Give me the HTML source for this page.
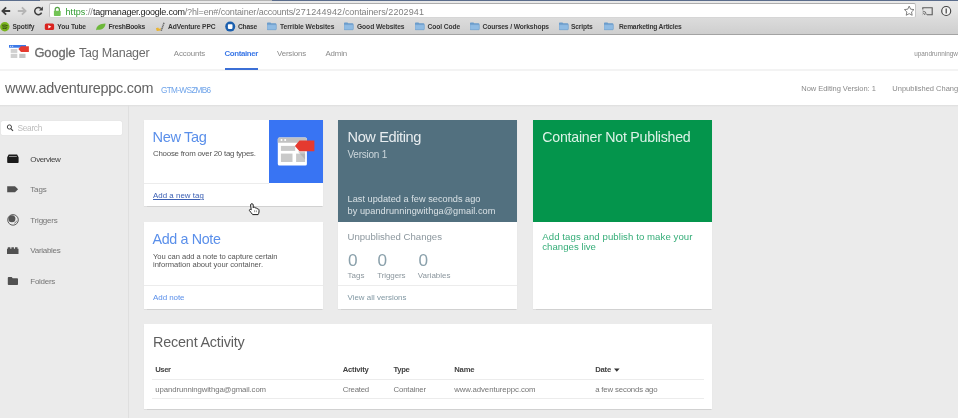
<!DOCTYPE html>
<html lang="en">
<head>
<meta charset="utf-8">
<title>Google Tag Manager</title>
<style>
html,body{margin:0;padding:0;}
body{width:958px;height:418px;overflow:hidden;position:relative;background:#ebebeb;font-family:"Liberation Sans",sans-serif;}
#root{position:absolute;left:0;top:0;width:958px;height:418px;overflow:hidden;will-change:transform;}
.a{position:absolute;}
.t{position:absolute;white-space:nowrap;}
#chrome{left:0;top:0;width:958px;height:35.2px;background:linear-gradient(#eaeaea 0,#e4e4e4 11px,#dadada 20px,#cfcfcf 33.5px);}
#topline{left:0;top:0;width:958px;height:1.2px;background:#b4b4b4;}
#urlbox{left:49px;top:3.2px;width:866.7px;height:14.8px;background:#fff;border:1px solid;border-color:#adadad #c6c6c6 #d6d6d6 #c6c6c6;border-radius:2px;box-sizing:border-box;}
#chromeborder{left:0;top:33.8px;width:958px;height:1.4px;background:#a3a3a3;}
#hdr{left:0;top:35.2px;width:958px;height:69.8px;background:#fff;}
#hdrline{left:0;top:69.4px;width:958px;height:1.6px;background:#f3f3f3;}
#hdrshadow{left:0;top:105px;width:958px;height:2px;background:linear-gradient(#dedede,#ebebeb);}
#navul{left:224.5px;top:67.8px;width:33.5px;height:2.3px;background:#3b6fd6;}
#sbline{left:128.2px;top:105px;width:1.1px;height:313px;background:#dfdfdf;}
#search{left:1px;top:120.6px;width:121px;height:14.6px;background:#fff;border-radius:1.5px;box-shadow:0 0 1px #c8c8c8;}
.card{background:#fff;box-shadow:0 0.6px 1px rgba(0,0,0,.11);}
.hr{height:1px;background:#ececec;}
</style>
</head>
<body>
<div id="root">
<!-- browser chrome -->
<div class="a" id="chrome"></div>
<div class="a" id="topline"></div>
<div class="a" style="left:0;top:0;width:40px;height:1px;background:#5b6d8c"></div>
<div class="a" style="left:272px;top:0;width:686px;height:1px;background:#5b6d8c"></div>
<div class="a" id="urlbox"></div>
<div class="a" id="chromeborder"></div>
<svg class="a" style="left:0;top:0" width="958" height="36" viewBox="0 0 958 36">
  <!-- back -->
  <path d="M10.2 11H2.6M6.1 7.3L2.4 11L6.1 14.7" fill="none" stroke="#3d3d3d" stroke-width="1.8"/>
  <!-- forward -->
  <path d="M17.8 11H25.4M21.9 7.3L25.6 11L21.9 14.7" fill="none" stroke="#b5b5b5" stroke-width="1.8"/>
  <!-- reload -->
  <path d="M41.6 12.6A3.6 3.6 0 1 1 40.9 8.6" fill="none" stroke="#3d3d3d" stroke-width="1.5"/>
  <path d="M42.9 6.6V10.6H38.9Z" fill="#3d3d3d"/>
  <!-- lock -->
  <path d="M55.2 11V9.500a2.100 2.100 0 0 1 4.200 0V11" fill="none" stroke="#55a244" stroke-width="1.200"/>
  <rect x="53.900" y="10.700" width="6.800" height="5.300" rx="0.800" fill="#72c455"/>
  <!-- star -->
  <path transform="translate(909.2 11.3) scale(1.06)" d="M0-4.9l1.35 2.9 3.15.4-2.3 2.2.6 3.15-2.8-1.55-2.8 1.55.6-3.15-2.3-2.2 3.15-.4z" fill="#fff" stroke="#6b6b6b" stroke-width="0.8" stroke-linejoin="round"/>
  <!-- cast -->
  <path d="M922.8 9.6V7.7h9.4v7h-5.2" fill="none" stroke="#5a5a5a" stroke-width="1.1"/>
  <path d="M922.6 14.9a0.1 0.1 0 0 1 0-.2M922.6 12.9a2 2 0 0 1 2 2M922.6 11a3.8 3.8 0 0 1 3.7 3.9" fill="none" stroke="#5a5a5a" stroke-width="0.8"/>
  <!-- info -->
  <circle cx="946.2" cy="11" r="4.5" fill="#f4f4f4" stroke="#444" stroke-width="1.15"/>
  <rect x="945.6" y="8.500" width="1.200" height="5" fill="#444"/>
  <!-- bookmarks icons -->
  <circle cx="4.8" cy="26.7" r="4.7" fill="#7ab51d"/>
  <path d="M2.4 25.2q2.6-.8 5 .4M2.7 26.9q2.2-.6 4.2.4M3 28.4q1.8-.4 3.4.3" fill="none" stroke="#2a3a10" stroke-width="0.8" stroke-linecap="round"/>
  <rect x="44.8" y="23.4" width="9.3" height="6.6" rx="1.6" fill="#d9231f"/>
  <path d="M48.3 25v3.4l3-1.7z" fill="#fff"/>
  <path d="M96.1 30.3c.3-4.600 3.600-6.700 9.400-6.800c-.2 4.300-3.200 6.500-8.200 6.300z" fill="#6db83a"/>
  <path d="M155.900 28.300l2.300-.9.900 1.600 1.500-1.200v2.800l-3.800.3z" fill="#eab432"/>
  <path d="M161.200 30.800l3-8.600" stroke="#6a6a6a" stroke-width="1.500" stroke-dasharray="1.300 0.500"/>
  <circle cx="230.2" cy="26.6" r="5" fill="#1b5fae"/>
  <rect x="227.9" y="24.3" width="4.6" height="4.6" rx="0.8" fill="#fff"/>
  <defs><g id="fold">
    <path d="M0 1.200a.8.800 0 0 1 .8-.8h2.600l.9.900h4.200a.8.800 0 0 1 .8.800v4.900a.8.800 0 0 1-.8.800H.8a.8.800 0 0 1-.8-.8z" fill="#6a9ccb"/>
    <path d="M0 2.600h9.300v4.400a.8.800 0 0 1-.8.800H.8a.8.800 0 0 1-.8-.8z" fill="#8fbbe3" stroke="#6a98c6" stroke-width="0.4"/>
  </g></defs>
</svg>
<svg class="a" style="left:267px;top:22.400px" width="10" height="9"><use href="#fold"/></svg>
<svg class="a" style="left:344px;top:22.400px" width="10" height="9"><use href="#fold"/></svg>
<svg class="a" style="left:415px;top:22.400px" width="10" height="9"><use href="#fold"/></svg>
<svg class="a" style="left:470px;top:22.400px" width="10" height="9"><use href="#fold"/></svg>
<svg class="a" style="left:558.800px;top:22.400px" width="10" height="9"><use href="#fold"/></svg>
<svg class="a" style="left:604px;top:22.400px" width="10" height="9"><use href="#fold"/></svg>

<!-- GTM header -->
<div class="a" id="hdr"></div>
<div class="a" id="hdrline"></div>
<div class="a" id="hdrshadow"></div>
<div class="a" id="navul"></div>
<svg class="a" style="left:8px;top:43px" width="24" height="18" viewBox="8 43 24 18">
  <rect x="9" y="45" width="17" height="2.700" fill="#3b78e7"/>
  <rect x="10" y="45.800" width="1.200" height="1" fill="#cfe0ff"/><rect x="12" y="45.800" width="1.200" height="1" fill="#cfe0ff"/>
  <rect x="10.700" y="49" width="6.600" height="3.900" fill="#d0d0d0"/>
  <rect x="10.700" y="53.800" width="6.600" height="4.200" fill="#d0d0d0"/>
  <rect x="19.300" y="53.800" width="6.200" height="4.200" fill="#c4c4c4"/>
  <path d="M18.400 49.100l2.600-2.900h7.900v5.800h-7.900z" fill="#e53a2f"/>
</svg>

<!-- sidebar -->
<div class="a" id="sbline"></div>
<div class="a" id="search"></div>
<svg class="a" style="left:0;top:120px" width="30" height="170" viewBox="0 120 30 170">
  <circle cx="9.400" cy="127" r="2.100" fill="none" stroke="#444" stroke-width="1"/>
  <path d="M10.900 128.600l2.100 2.200" stroke="#444" stroke-width="1.200"/>
  <!-- overview -->
  <path d="M7.200 157.200l1.500-2.600h8.400l1.500 2.600v5a.8.800 0 0 1-.8.800H8a.8.800 0 0 1-.8-.8z" fill="#1a1a1a"/>
  <path d="M9 156.500h7.800" stroke="#9a9a9a" stroke-width="0.900"/>
  <!-- tags -->
  <path d="M7.200 186.300h7.800l3.100 3-3.100 3H7.200z" fill="#515151"/>
  <!-- triggers -->
  <circle cx="13" cy="219.900" r="5.300" fill="none" stroke="#555" stroke-width="0.950"/>
  <circle cx="11.900" cy="218.800" r="3.500" fill="#555"/>
  <path d="M14.200 223.300a3.600 3.600 0 0 0 2.500-2.600" fill="none" stroke="#555" stroke-width="0.900" opacity=".75"/>
  <!-- variables -->
  <path d="M7 253.900v-5.200h.8v-1.400h2.500v1.400h1.100v-1.400h2.500v1.400h1.100v-1.400h2.500v1.400h1V253.900z" fill="#515151"/>
  <!-- folders -->
  <path d="M7.800 277.900a.8.800 0 0 1 .8-.8h3.100l1 1.200h4.500a.8.800 0 0 1 .8.800v5.100a.8.800 0 0 1-.8.800H8.600a.8.800 0 0 1-.8-.8z" fill="#515151"/>
</svg>

<!-- card: new tag -->
<div class="a card" style="left:144px;top:120px;width:179px;height:86.4px;"></div>
<div class="a hr" style="left:144px;top:182.5px;width:125px;"></div>
<div class="a" style="left:269px;top:120px;width:54px;height:63px;background:#3874f3;"></div>
<svg class="a" style="left:269px;top:120px" width="54" height="63" viewBox="269 120 54 63">
  <rect x="277.800" y="137.400" width="29.100" height="28.200" rx="1.500" fill="#fff"/>
  <path d="M277.800 142.800v-3.900a1.500 1.500 0 0 1 1.500-1.500h26.100a1.500 1.500 0 0 1 1.500 1.500v3.900z" fill="#c2c2c2"/>
  <circle cx="281.500" cy="140.100" r="1" fill="#fff"/><circle cx="285.200" cy="140.100" r="1" fill="#fff"/>
  <rect x="280.900" y="145.900" width="14.300" height="5" fill="#c9c9c9"/>
  <rect x="280.900" y="153.600" width="11.600" height="8.400" fill="#c9c9c9"/>
  <rect x="296.100" y="153.600" width="9" height="8.400" fill="#c9c9c9"/>
  <path d="M298 151.500l7.100 8v-8z" fill="#a9a9a9" opacity=".6"/>
  <path d="M294.900 145.900l4.600-5.400h14.900v10.800h-14.900z" fill="#e53a2f"/>
</svg>

<!-- card: add a note -->
<div class="a card" style="left:144px;top:222px;width:179px;height:86.7px;"></div>
<div class="a hr" style="left:144px;top:284.5px;width:179px;"></div>

<!-- card: now editing -->
<div class="a card" style="left:338.3px;top:120px;width:179px;height:188.7px;"></div>
<div class="a" style="left:338.3px;top:120px;width:179px;height:101.5px;background:#52707f;"></div>
<div class="a hr" style="left:338.3px;top:285px;width:179px;"></div>

<!-- card: container not published -->
<div class="a card" style="left:532.7px;top:120px;width:179.2px;height:188.7px;"></div>
<div class="a" style="left:532.7px;top:120px;width:179.2px;height:101.5px;background:#04954c;"></div>

<!-- card: recent activity -->
<div class="a card" style="left:144px;top:323.7px;width:568px;height:85.3px;"></div>
<div class="a hr" style="left:152px;top:379px;width:552px;"></div>
<div class="a hr" style="left:152px;top:398px;width:552px;"></div>
<svg class="a" style="left:613.2px;top:367px" width="8" height="6" viewBox="0 0 8 6"><path d="M1 1.500h5.600L3.800 4.700z" fill="#333"/></svg>

<span class="t" id="url1" style="left:65.5px;top:6.00px;font-size:9px;line-height:12px;color:#2e9a2e;letter-spacing:0.077px;">https</span>
<span class="t" id="url2" style="left:85.6px;top:6.00px;font-size:9px;line-height:12px;color:#8a8a8a;letter-spacing:-0.205px;">://</span>
<span class="t" id="url3" style="left:93px;top:6.00px;font-size:9px;line-height:12px;color:#1a1a1a;letter-spacing:-0.232px;">tagmanager.google.com</span>
<span class="t" id="url4" style="left:184.8px;top:6.00px;font-size:9px;line-height:12px;color:#808080;letter-spacing:-0.177px;">/?hl=en#/</span>
<span class="t" id="url5" style="left:220.7px;top:6.00px;font-size:9px;line-height:12px;color:#808080;letter-spacing:-0.170px;">container</span>
<span class="t" id="url6" style="left:256.4px;top:6.00px;font-size:9px;line-height:12px;color:#808080;letter-spacing:-0.223px;">/accounts/</span>
<span class="t" id="url7" style="left:295.6px;top:6.00px;font-size:9px;line-height:12px;color:#808080;letter-spacing:0.182px;">271244942</span>
<span class="t" id="url8" style="left:342.5px;top:6.00px;font-size:9px;line-height:12px;color:#808080;letter-spacing:-0.086px;">/containers/</span>
<span class="t" id="url9" style="left:388.3px;top:6.00px;font-size:9px;line-height:12px;color:#808080;letter-spacing:0.093px;">2202941</span>
<span class="t" id="bm1" style="left:12.5px;top:22.00px;font-size:6.7px;line-height:9px;color:#363636;letter-spacing:-0.110px;font-weight:bold">Spotify</span>
<span class="t" id="bm2" style="left:57.3px;top:22.00px;font-size:6.7px;line-height:9px;color:#363636;letter-spacing:-0.096px;font-weight:bold">You Tube</span>
<span class="t" id="bm3" style="left:108.5px;top:22.00px;font-size:6.7px;line-height:9px;color:#363636;letter-spacing:-0.216px;font-weight:bold">FreshBooks</span>
<span class="t" id="bm4" style="left:168px;top:22.00px;font-size:6.7px;line-height:9px;color:#363636;letter-spacing:-0.120px;font-weight:bold">AdVenture PPC</span>
<span class="t" id="bm5" style="left:238px;top:22.00px;font-size:6.7px;line-height:9px;color:#363636;letter-spacing:-0.216px;font-weight:bold">Chase</span>
<span class="t" id="bm6" style="left:280px;top:22.00px;font-size:6.7px;line-height:9px;color:#363636;letter-spacing:-0.038px;font-weight:bold">Terrible Websites</span>
<span class="t" id="bm7" style="left:357px;top:22.00px;font-size:6.7px;line-height:9px;color:#363636;letter-spacing:-0.082px;font-weight:bold">Good Websites</span>
<span class="t" id="bm8" style="left:427.5px;top:22.00px;font-size:6.7px;line-height:9px;color:#363636;letter-spacing:-0.104px;font-weight:bold">Cool Code</span>
<span class="t" id="bm9" style="left:482.5px;top:22.00px;font-size:6.7px;line-height:9px;color:#363636;letter-spacing:-0.113px;font-weight:bold">Courses / Workshops</span>
<span class="t" id="bm10" style="left:571px;top:22.00px;font-size:6.7px;line-height:9px;color:#363636;letter-spacing:-0.167px;font-weight:bold">Scripts</span>
<span class="t" id="bm11" style="left:619px;top:22.00px;font-size:6.7px;line-height:9px;color:#363636;letter-spacing:-0.208px;font-weight:bold">Remarketing Articles</span>
<span class="t" id="lg1" style="left:34.4px;top:44.00px;font-size:12.9px;line-height:17px;color:#6b6b6b;letter-spacing:-0.096px;-webkit-text-stroke:0.3px #6b6b6b">Google</span>
<span class="t" id="lg2" style="left:79px;top:45.00px;font-size:12.5px;line-height:16px;color:#6b6b6b;letter-spacing:-0.224px;">Tag Manager</span>
<span class="t" id="nav1" style="left:173.8px;top:48.00px;font-size:7.9px;line-height:11px;color:#8a8a8a;letter-spacing:-0.159px;">Accounts</span>
<span class="t" id="nav2" style="left:224.5px;top:48.00px;font-size:7.9px;line-height:11px;color:#3b78e7;letter-spacing:-0.370px;font-weight:bold">Container</span>
<span class="t" id="nav3" style="left:277px;top:48.00px;font-size:7.9px;line-height:11px;color:#8a8a8a;letter-spacing:-0.158px;">Versions</span>
<span class="t" id="nav4" style="left:325.5px;top:48.00px;font-size:7.9px;line-height:11px;color:#8a8a8a;letter-spacing:-0.175px;">Admin</span>
<span class="t" id="usr" style="left:914.2px;top:49.00px;font-size:6.4px;line-height:9px;color:#8a8a8a;">upandrunningwithga@gmail.com</span>
<span class="t" id="site" style="left:5px;top:79.00px;font-size:14.4px;line-height:18px;color:#626262;letter-spacing:-0.224px;">www.adventureppc.com</span>
<span class="t" id="gtm" style="left:161px;top:85.00px;font-size:8.2px;line-height:11px;color:#6fa4ea;letter-spacing:-0.645px;">GTM-WSZMB6</span>
<span class="t" id="ver" style="left:801.3px;top:83.00px;font-size:7.5px;line-height:11px;color:#8a8a8a;letter-spacing:-0.044px;">Now Editing Version: 1</span>
<span class="t" id="unp" style="left:892.3px;top:83.00px;font-size:7.5px;line-height:11px;color:#8a8a8a;">Unpublished Changes</span>
<span class="t" id="srch" style="left:17.5px;top:122.00px;font-size:8.4px;line-height:12px;color:#bdbdbd;letter-spacing:-0.341px;">Search</span>
<span class="t" id="sb1" style="left:30.3px;top:154.00px;font-size:8.0px;line-height:11px;color:#424242;letter-spacing:-0.393px;">Overview</span>
<span class="t" id="sb2" style="left:30.3px;top:184.00px;font-size:8.0px;line-height:11px;color:#757575;letter-spacing:-0.177px;">Tags</span>
<span class="t" id="sb3" style="left:30.3px;top:215.00px;font-size:8.0px;line-height:11px;color:#757575;letter-spacing:-0.231px;">Triggers</span>
<span class="t" id="sb4" style="left:30.3px;top:245.00px;font-size:8.0px;line-height:11px;color:#757575;letter-spacing:-0.285px;">Variables</span>
<span class="t" id="sb5" style="left:30.3px;top:276.00px;font-size:8.0px;line-height:11px;color:#757575;letter-spacing:-0.284px;">Folders</span>
<span class="t" id="c1h" style="left:152.6px;top:128.00px;font-size:14.6px;line-height:18px;color:#5a8fea;letter-spacing:-0.374px;">New Tag</span>
<span class="t" id="c1s" style="left:153px;top:148.00px;font-size:7.9px;line-height:11px;color:#555;letter-spacing:-0.246px;">Choose from over 20 tag types.</span>
<span class="t" id="c1l" style="left:153px;top:190.00px;font-size:7.9px;line-height:11px;color:#3c60b4;letter-spacing:0.027px;text-decoration:underline;text-decoration-thickness:0.8px;text-underline-offset:0.8px">Add a new tag</span>
<span class="t" id="c2h" style="left:152.6px;top:230.00px;font-size:14.3px;line-height:18px;color:#5a8fea;letter-spacing:-0.365px;">Add a Note</span>
<span class="t" id="c2s1" style="left:153px;top:251.00px;font-size:7.6px;line-height:11px;color:#555;letter-spacing:-0.039px;">You can add a note to capture certain</span>
<span class="t" id="c2s2" style="left:153px;top:259.00px;font-size:7.6px;line-height:11px;color:#555;letter-spacing:-0.018px;">information about your container.</span>
<span class="t" id="c2l" style="left:153px;top:292.00px;font-size:8.0px;line-height:11px;color:#5a8fea;letter-spacing:-0.066px;">Add note</span>
<span class="t" id="c3h" style="left:347.5px;top:128.00px;font-size:14.6px;line-height:18px;color:#e8edf0;letter-spacing:-0.398px;">Now Editing</span>
<span class="t" id="c3s" style="left:347.5px;top:148.00px;font-size:10px;line-height:13px;color:#cdd7dc;letter-spacing:-0.245px;">Version 1</span>
<span class="t" id="c3u1" style="left:347.5px;top:193.00px;font-size:9.2px;line-height:12px;color:#d9e1e5;letter-spacing:0.023px;">Last updated a few seconds ago</span>
<span class="t" id="c3u2" style="left:347.5px;top:205.00px;font-size:9.2px;line-height:12px;color:#d9e1e5;letter-spacing:0.058px;">by upandrunningwithga@gmail.com</span>
<span class="t" id="c3c" style="left:347.5px;top:230.00px;font-size:9.6px;line-height:13px;color:#8c979e;letter-spacing:0.005px;">Unpublished Changes</span>
<span class="t" id="z1" style="left:348px;top:249.00px;font-size:17.2px;line-height:22px;color:#8aa0ab;letter-spacing:-0.562px;">0</span>
<span class="t" id="z2" style="left:377.5px;top:249.00px;font-size:17.2px;line-height:22px;color:#8aa0ab;letter-spacing:-0.562px;">0</span>
<span class="t" id="z3" style="left:418.5px;top:249.00px;font-size:17.2px;line-height:22px;color:#8aa0ab;letter-spacing:-0.562px;">0</span>
<span class="t" id="zl1" style="left:347.5px;top:270.00px;font-size:8px;line-height:11px;color:#8c979e;letter-spacing:0.023px;">Tags</span>
<span class="t" id="zl2" style="left:377.2px;top:270.00px;font-size:8px;line-height:11px;color:#8c979e;letter-spacing:-0.093px;">Triggers</span>
<span class="t" id="zl3" style="left:417.8px;top:270.00px;font-size:8px;line-height:11px;color:#8c979e;letter-spacing:-0.007px;">Variables</span>
<span class="t" id="c3l" style="left:347.5px;top:292.00px;font-size:7.9px;line-height:11px;color:#8097a2;letter-spacing:0.022px;">View all versions</span>
<span class="t" id="c4h" style="left:542.3px;top:128.00px;font-size:14.2px;line-height:18px;color:#ddf2e7;letter-spacing:-0.243px;">Container Not Published</span>
<span class="t" id="c4s1" style="left:542.3px;top:230.00px;font-size:9.6px;line-height:13px;color:#35ad78;letter-spacing:0.075px;">Add tags and publish to make your</span>
<span class="t" id="c4s2" style="left:542.3px;top:240.00px;font-size:9.6px;line-height:13px;color:#35ad78;letter-spacing:0.030px;">changes live</span>
<span class="t" id="rah" style="left:153px;top:333.00px;font-size:14.4px;line-height:18px;color:#5f5f5f;letter-spacing:-0.192px;">Recent Activity</span>
<span class="t" id="th1" style="left:155.3px;top:364.00px;font-size:7.7px;line-height:11px;color:#424242;letter-spacing:-0.477px;font-weight:bold">User</span>
<span class="t" id="th2" style="left:342.8px;top:364.00px;font-size:7.7px;line-height:11px;color:#424242;letter-spacing:-0.260px;font-weight:bold">Activity</span>
<span class="t" id="th3" style="left:393.5px;top:364.00px;font-size:7.7px;line-height:11px;color:#424242;letter-spacing:-0.344px;font-weight:bold">Type</span>
<span class="t" id="th4" style="left:454.2px;top:364.00px;font-size:7.7px;line-height:11px;color:#424242;letter-spacing:-0.163px;font-weight:bold">Name</span>
<span class="t" id="th5" style="left:595.2px;top:364.00px;font-size:7.7px;line-height:11px;color:#424242;letter-spacing:-0.218px;font-weight:bold">Date</span>
<span class="t" id="td1" style="left:155.3px;top:384.00px;font-size:7.8px;line-height:11px;color:#757575;letter-spacing:-0.106px;">upandrunningwithga@gmail.com</span>
<span class="t" id="td2" style="left:342.8px;top:384.00px;font-size:7.8px;line-height:11px;color:#757575;letter-spacing:-0.221px;">Created</span>
<span class="t" id="td3" style="left:393.5px;top:384.00px;font-size:7.8px;line-height:11px;color:#757575;letter-spacing:-0.146px;">Container</span>
<span class="t" id="td4" style="left:454.2px;top:384.00px;font-size:7.8px;line-height:11px;color:#757575;letter-spacing:-0.074px;">www.adventureppc.com</span>
<span class="t" id="td5" style="left:595.2px;top:384.00px;font-size:7.8px;line-height:11px;color:#757575;letter-spacing:-0.161px;">a few seconds ago</span>

<!-- cursor -->
<svg class="a" style="left:247px;top:202px" width="15" height="15" viewBox="247 202 15 15">
  <path d="M250.600 204.900c0-1.600 2.600-1.600 2.600 0v2.800l.2-.5c1.200-.3 1.700.2 1.800.8c1-.3 1.700.1 1.800.8c1.200-.2 2 .4 2 1.400v1.800c0 1.200-.6 1.700-.9 2.600h-5.400c-.6-1.200-2.600-2.700-3.300-4.100c-.4-.9.900-1.600 1.800-.6z" fill="#fff" stroke="#1c1c1c" stroke-width="1" stroke-linejoin="round"/>
  <path d="M254.600 210.200v2M256.400 210.400v1.800" stroke="#555" stroke-width="0.600"/>
</svg>
</div>
</body>
</html>
